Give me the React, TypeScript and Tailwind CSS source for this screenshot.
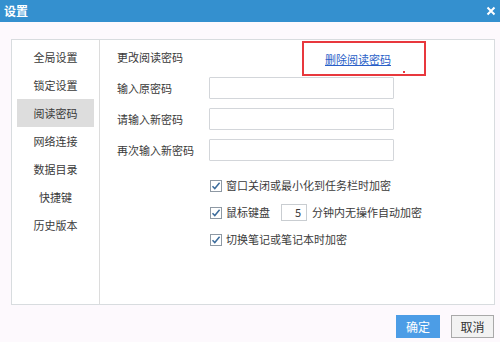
import React from 'react';

const menu = ['全局设置', '锁定设置', '阅读密码', '网络连接', '数据目录', '快捷键', '历史版本'];

function Check() {
    return (
        <svg width="12" height="12" viewBox="0 0 12 12" className="shrink-0">
            <rect x="0.5" y="0.5" width="11" height="11" fill="#ffffff" stroke="#8e99a4" />
            <path d="M2.5 6.2 L4.8 8.6 L9.6 2.8" fill="none" stroke="#3c6c9c" strokeWidth="1.5" />
        </svg>
    );
}

function Field({ label }: { label: string }) {
    return (
        <div className="flex items-center h-[22px]">
            <span className="w-[92px] shrink-0">{label}</span>
            <div className="w-[185px] h-[22px] bg-white border border-[#d3d6da] rounded-[1px]" />
        </div>
    );
}

export default function App() {
    return (
        <div
            className="w-[500px] h-[342px] bg-[#fdf9fd] flex flex-col overflow-hidden text-[11px] text-[#3a3a3a]"
            style={{ fontFamily: '"Noto Sans CJK SC", "Noto Sans", sans-serif' }}
        >
            {/* 标题栏 */}
            <div className="h-[22px] bg-[#3490cf] flex items-center justify-between pl-[4px] pr-[2px] text-white shrink-0">
                <span className="text-[12px] font-bold leading-none">设置</span>
                <svg width="10" height="10" viewBox="0 0 10 10" className="mr-[2px]">
                    <path d="M1.5 1.5 L8.5 8.5 M8.5 1.5 L1.5 8.5" stroke="#ffffff" strokeWidth="2" />
                </svg>
            </div>

            <div className="pt-[17px] pl-[11px]">
                <div className="w-[484px] h-[266px] bg-white border border-[#d8dcdf] flex">
                    {/* 左侧菜单 */}
                    <div className="w-[88px] border-r border-[#dcdcdc] pt-[3px] px-[5px] flex flex-col shrink-0">
                        {menu.map((m) => (
                            <div
                                key={m}
                                className={
                                    'h-[28px] flex items-center justify-center ' +
                                    (m === '阅读密码' ? 'bg-[#dddddd]' : '')
                                }
                            >
                                {m}
                            </div>
                        ))}
                    </div>

                    {/* 右侧内容 */}
                    <div className="relative flex-1 pt-[3px] pl-[17px] flex flex-col">
                        <div className="h-[28px] flex items-center">更改阅读密码</div>

                        <div className="mt-[6px] flex flex-col gap-[9px]">
                            <Field label="输入原密码" />
                            <Field label="请输入新密码" />
                            <Field label="再次输入新密码" />
                        </div>

                        <div className="mt-[11px] pl-[93px] flex flex-col">
                            <div className="h-[27px] flex items-center gap-[4px]">
                                <Check />
                                <span>窗口关闭或最小化到任务栏时加密</span>
                            </div>
                            <div className="h-[27px] flex items-center gap-[4px]">
                                <Check />
                                <span>鼠标键盘</span>
                                <div className="ml-[7px] w-[26px] h-[17px] bg-white border border-[#c9cdd1] flex items-center justify-end pr-[5px]">
                                    5
                                </div>
                                <span className="ml-[1px]">分钟内无操作自动加密</span>
                            </div>
                            <div className="h-[27px] flex items-center gap-[4px]">
                                <Check />
                                <span>切换笔记或笔记本时加密</span>
                            </div>
                        </div>

                        {/* 红框标注 */}
                        <div className="absolute left-[202px] top-[1px] w-[124px] h-[35px] border-2 border-[#e8383d]">
                            <span className="absolute left-[21px] top-[8px] text-[#2a5fc8] underline leading-[16px]">
                                删除阅读密码
                            </span>
                            <span className="absolute left-[99px] top-[28px] w-[2px] h-[2px] bg-[#e8383d]" />
                        </div>
                    </div>
                </div>
            </div>

            {/* 底部按钮 */}
            <div className="mt-[10px] flex justify-end gap-[11px] pr-[6px]">
                <button className="w-[44px] h-[23px] bg-[#4c9de6] text-white text-[12px]">确定</button>
                <button className="w-[43px] h-[23px] bg-[#f2f2f2] border border-[#a9a9a9] text-[#333] text-[12px]">
                    取消
                </button>
            </div>
        </div>
    );
}
